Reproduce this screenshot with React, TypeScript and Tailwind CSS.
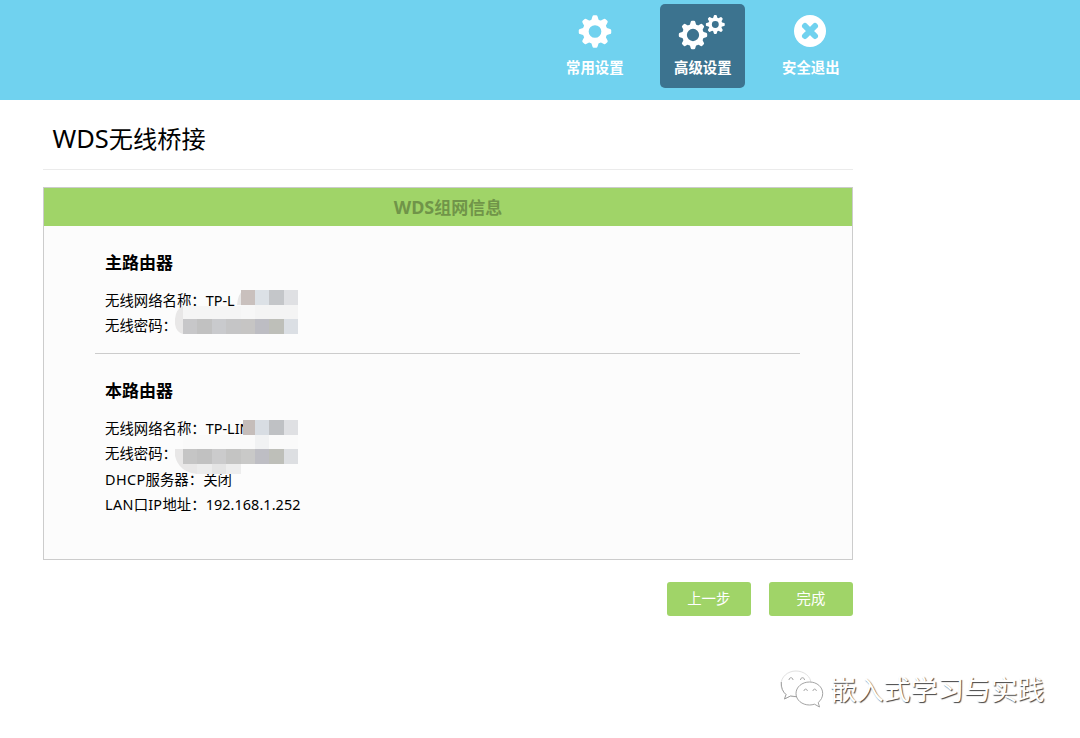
import type { ReactNode } from 'react';

type Block = [x: number, y: number, w: number, h: number, color: string];

const mainBlocks: Block[] = [
  [8, 16, 58, 14, '#f5f5f5'],
  [66, 15, 14, 15, '#f7f7f7'],
  [80, 15, 43, 15, '#f4f4f4'],
  [66, 0, 14, 15, '#c9c0bd'],
  [80, 0, 14, 15, '#dce1e6'],
  [94, 0, 15, 15, '#c4c6c9'],
  [109, 0, 14, 15, '#dfe0e3'],
  [8, 29, 14, 15, '#c7c7c9'],
  [22, 29, 15, 15, '#c1c1c1'],
  [37, 29, 14, 15, '#c9cacd'],
  [51, 29, 15, 15, '#c5c5c6'],
  [66, 29, 14, 15, '#c6c5c4'],
  [80, 29, 14, 15, '#bdbdc3'],
  [94, 29, 15, 15, '#bebfb9'],
  [109, 29, 14, 15, '#dbdfe4'],
];

const localBlocks: Block[] = [
  [8, 15, 115, 15, '#fafafa'],
  [80, 15, 14, 15, '#f1f2f3'],
  [68, 0, 12, 15, '#c5bdba'],
  [80, 0, 14, 15, '#d8dde3'],
  [94, 0, 15, 15, '#bfc1c4'],
  [109, 0, 14, 15, '#dfe0e3'],
  [8, 29, 14, 15, '#c5c5c5'],
  [22, 29, 15, 15, '#c1c1c1'],
  [37, 29, 14, 15, '#cbcbcc'],
  [51, 29, 15, 15, '#c4c4c3'],
  [66, 29, 14, 15, '#c9c9c8'],
  [80, 29, 14, 15, '#bebec4'],
  [94, 29, 15, 15, '#bebfb9'],
  [109, 29, 14, 15, '#dddfe2'],
  [22, 44, 15, 10, '#ececec'],
  [37, 44, 14, 10, '#e4e4e4'],
  [51, 44, 15, 10, '#ededed'],
];

const angles = [0, 45, 90, 135, 180, 225, 270, 315];

function Gear({ cx, cy, scale, ring, width }: { cx: number; cy: number; scale: number; ring: number; width: number }) {
  return (
    <g transform={`translate(${cx} ${cy}) scale(${scale})`}>
      <circle r={ring} fill="none" stroke="#fff" strokeWidth={width} />
      {angles.map((a) => (
        <path key={a} d="M-4-10.500L-2.600-15.200Q-2.300-16.400-1.200-16.400H1.200Q2.300-16.400 2.600-15.200L4-10.500Z" fill="#fff" transform={`rotate(${a})`} />
      ))}
    </g>
  );
}

function NavItem({ label, active, children }: { label: string; active?: boolean; children: ReactNode }) {
  return (
    <button
      type="button"
      className={`flex h-[83.5px] w-[85px] flex-col items-center rounded-[5px] text-[14.4px] leading-5 font-bold text-white ${active ? 'bg-[#3c738f]' : ''}`}
    >
      <svg className="mt-1 h-[50px] w-[60px] shrink-0" viewBox="0 0 60 50">
        {children}
      </svg>
      <span>{label}</span>
    </button>
  );
}

function Mosaic({ blocks, smear, className }: { blocks: Block[]; smear: string; className: string }) {
  return (
    <svg className={`absolute left-[80px] h-[56px] w-[124px] ${className}`} viewBox="0 0 124 56" shapeRendering="crispEdges">
      <path d={smear} fill="#e8e7e7" shapeRendering="auto" />
      {blocks.map(([x, y, w, h, color]) => (
        <rect key={`${x}-${y}`} x={x} y={y} width={w} height={h} fill={color} />
      ))}
    </svg>
  );
}

function Row({ label, value }: { label: string; value?: string }) {
  return (
    <div className="h-[25.4px] whitespace-nowrap">
      {label}
      {value}
    </div>
  );
}

export default function App() {
  return (
    <div className="h-[738px] w-[1080px] overflow-hidden bg-white font-['Noto_Sans','Noto_Sans_CJK_SC',sans-serif] text-black">
      <header className="flex h-[100px] gap-[23px] bg-[#70d2ef] pt-1 pl-[552.3px]">
        <NavItem label="常用设置">
          <Gear cx={30} cy={23.5} scale={0.99} ring={9.4} width={6} />
        </NavItem>
        <NavItem label="高级设置" active>
          <Gear cx={20} cy={27} scale={0.865} ring={9.8} width={5.4} />
          <Gear cx={42.3} cy={16.5} scale={0.575} ring={9} width={6} />
        </NavItem>
        <NavItem label="安全退出">
          <circle cx="29" cy="23" r="16" fill="#fff" />
          <path d="M24 18L34 28M34 18L24 28" stroke="#70d2ef" strokeWidth="6" strokeLinecap="round" />
        </NavItem>
      </header>

      <main className="ml-[43px] w-[810px]">
        <h1 className="h-[70px] border-b border-[#ebebeb] pt-[20px] pl-[9.5px] text-[24.2px] leading-[36px]">
          <span className="text-[25.5px]">WDS</span>无线桥接
        </h1>

        <section className="mt-[17px] h-[373px] border border-[#ccc] bg-[#fcfcfc]">
          <h2 className="h-[38px] bg-[#a0d468] text-center text-[17px] leading-[38px] font-bold text-[#709449]">
            <span className="text-[18px]">WDS</span>组网信息
          </h2>

          <div className="relative ml-[51px] h-[128px] w-[705px] border-b border-[#ccc] pt-[24px] pl-[10px] text-[14.4px] leading-[25.4px]">
            <h3 className="mb-[12px] text-[17px] leading-[26px] font-bold">主路由器</h3>
            <Row label="无线网络名称：" value="TP-L" />
            <Row label="无线密码：" />
            <Mosaic className="top-[64px]" blocks={mainBlocks} smear="M62 15Q63 4 68 0H80V15ZM8 16Q-1 20 0 34Q1 42 8 44Z" />
          </div>

          <div className="relative ml-[51px] pt-[24px] pl-[10px] text-[14.4px] leading-[25.4px]">
            <h3 className="mb-[12px] text-[17px] leading-[26px] font-bold">本路由器</h3>
            <Row label="无线网络名称：" value="TP-LIN" />
            <Row label="无线密码：" />
            <div className="h-[25.4px] whitespace-nowrap">
              <span className="tracking-[0.4px]">DHCP</span>服务器：关闭
            </div>
            <div className="h-[25.4px] whitespace-nowrap">
              <span className="tracking-[0.35px]">LAN</span>口<span className="tracking-[0.35px]">IP</span>地址：<span className="tracking-[0.08px]">192.168.1.252</span>
            </div>
            <Mosaic className="top-[66px]" blocks={localBlocks} smear="M0 29H8V44H22V54Q4 52 0 36Z" />
          </div>
        </section>

        <div className="mt-[22px] flex justify-end gap-[18px] text-[14.4px] text-white">
          <button type="button" className="h-[34px] w-[84.5px] rounded-[3px] bg-[#a0d468]">上一步</button>
          <button type="button" className="h-[34px] w-[84px] rounded-[3px] bg-[#a0d468]">完成</button>
        </div>
      </main>

      <footer className="mt-[52px] ml-[780px] flex h-[44px] items-center gap-[6px]">
        <svg className="h-[44px] w-[44px] shrink-0" viewBox="0 0 44 44" fill="#fff" stroke="#999" strokeWidth="0.9">
          <path d="M16 3C7.500 3 1 9 1 16.500c0 4 2 7.500 5 10L4.500 31l6-3c2 .6 4 .8 6 .7C29 28 31 20 31 15.500 31 8.500 24 3 16 3Z" stroke="#ddd" />
          <path d="M1.300 14C1 20 3 24 6 26.500L4.500 31l6-3 6 .7" fill="none" />
          <path d="M29.500 14C22 14 16 19 16 25.500S22 37 29.500 37c1.700 0 3.500-.3 5-.8l5 2.800-1.300-4.500c2.800-2.200 4.500-5.500 4.500-9C42.700 19 37 14 29.500 14Z" />
          <path d="M9 12c0-3 4-3 4 0M20.500 12c0-3 4-3 4 0M24 23c0-2.500 3.300-2.500 3.300 0M33 23c0-2.500 3.300-2.500 3.300 0" fill="none" />
        </svg>
        <span className="text-[26.8px] leading-[38px] whitespace-nowrap text-white [text-shadow:1px_1px_1px_#444]">嵌入式学习与实践</span>
      </footer>
    </div>
  );
}
